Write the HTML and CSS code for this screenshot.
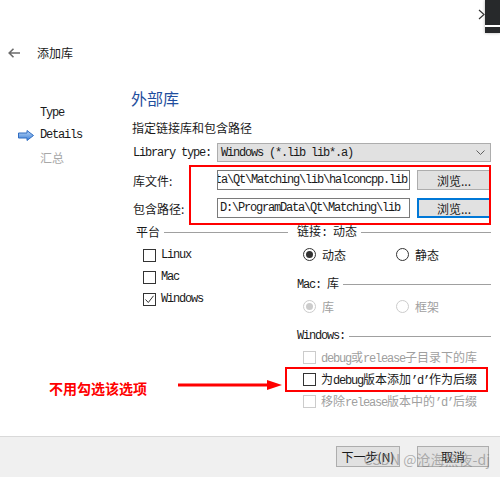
FILE: index.html
```html
<!DOCTYPE html>
<html lang="zh-CN">
<head>
    <meta charset="UTF-8">
    <meta name="viewport" content="width=device-width, initial-scale=1.0">
    <title>添加库</title>
    <link rel="stylesheet" href="styles.css">
</head>
<body>
    <div class="window">
        <div class="corner"><span class="corner-line"></span></div>
        <svg class="corner-chev" width="7" height="11" viewBox="0 0 7 11"><path d="M1 1 L6 5.5 L1 10" fill="none" stroke="#333" stroke-width="1.2"/></svg>

        <div class="header">
            <svg class="back" width="12" height="10" viewBox="0 0 12 10"><path d="M1 5 H12 M5.5 0.8 L1.2 5 L5.5 9.2" fill="none" stroke="#6b6b6b" stroke-width="1.6"/></svg>
            <span class="title">添加库</span>
        </div>

        <div class="main">
            <ul class="steps">
                <li><span class="step-icon"></span><span class="m">Type</span></li>
                <li class="current">
                    <span class="step-icon">
                        <svg width="16" height="11" viewBox="0 0 16 11">
                            <defs>
                                <linearGradient id="arr" x1="0" y1="0" x2="0" y2="1">
                                    <stop offset="0" stop-color="#b9d6f7"/>
                                    <stop offset="1" stop-color="#3d7fd6"/>
                                </linearGradient>
                            </defs>
                            <path d="M0.5 3 H9 V0.5 L15.5 5.5 L9 10.5 V8 H0.5 Z" fill="url(#arr)" stroke="#2f6cc2" stroke-width="1"/>
                        </svg>
                    </span>
                    <span class="m">Details</span>
                </li>
                <li class="todo"><span class="step-icon"></span>汇总</li>
            </ul>

            <div class="content">
                <h2>外部库</h2>
                <p class="subtitle">指定链接库和包含路径</p>

                <div class="form">
                    <label class="m">Library type:</label>
                    <div class="combo">
                        <span class="m">Windows (*.lib lib*.a)</span>
                        <svg width="9" height="5" viewBox="0 0 9 5"><path d="M0.5 0.5 L4.5 4.5 L8.5 0.5" fill="none" stroke="#606060" stroke-width="1"/></svg>
                    </div>
                    <label>库文件:</label>
                    <div class="path-row">
                        <div class="path scrolled"><span class="m">D:\ProgramData\Qt\Matching\lib\halconcpp.lib</span></div>
                        <button class="browse">浏览...</button>
                    </div>
                    <label>包含路径:</label>
                    <div class="path-row">
                        <div class="path"><span class="m">D:\ProgramData\Qt\Matching\lib</span></div>
                        <button class="browse focused">浏览...</button>
                    </div>
                    <div class="note-box"></div>
                </div>

                <div class="groups">
                    <div class="group group-left">
                        <div class="group-title"><span>平台</span></div>
                        <div class="rows">
                            <label class="check"><span class="box"></span><span class="m">Linux</span></label>
                            <label class="check"><span class="box"></span><span class="m">Mac</span></label>
                            <label class="check"><span class="box checked"><svg width="11" height="11" viewBox="0 0 11 11"><path d="M1.5 5.5 L4.3 8.5 L9.5 1.8" fill="none" stroke="#333" stroke-width="1"/></svg></span><span class="m">Windows</span></label>
                        </div>
                    </div>

                    <div class="group group-right">
                        <div class="group-title"><span>链接<span class="m">: </span>动态</span></div>
                        <div class="radio-row">
                            <label class="radio"><span class="dot on"></span>动态</label>
                            <label class="radio"><span class="dot"></span>静态</label>
                        </div>

                        <div class="group-title spaced"><span><span class="m">Mac: </span>库</span></div>
                        <div class="radio-row disabled">
                            <label class="radio"><span class="dot on"></span>库</label>
                            <label class="radio"><span class="dot"></span>框架</label>
                        </div>

                        <div class="group-title spaced"><span class="m">Windows:</span></div>
                        <div class="win-rows">
                            <label class="check disabled"><span class="box"></span><span class="txt"><span class="m">debug</span>或<span class="m">release</span>子目录下的库</span></label>
                            <label class="check flagged"><span class="box"></span><span class="txt">为<span class="m">debug</span>版本添加<span class="m">’d’</span>作为后缀</span></label>
                            <label class="check disabled"><span class="box"></span><span class="txt">移除<span class="m">release</span>版本中的<span class="m">’d’</span>后缀</span></label>
                        </div>
                    </div>
                </div>
            </div>
        </div>

        <div class="annotation">
            <span class="annotation-text">不用勾选该选项</span>
            <svg width="104" height="10" viewBox="0 0 104 10"><path d="M0 5 H92" stroke="#f00" stroke-width="3"/><path d="M89 0 L104 5 L89 10 Z" fill="#f00"/></svg>
        </div>

        <div class="footer">
            <button class="btn next">下一步(N)</button>
            <button class="btn cancel">取消</button>
        </div>
        <div class="watermark">CSDN @沧海黑夜-dj</div>
    </div>
</body>
</html>
```

FILE: styles.css
```css
* {
    box-sizing: border-box;
}

html, body {
    margin: 0;
    padding: 0;
}

body {
    width: 500px;
    height: 477px;
    overflow: hidden;
    background: #fff;
    font-family: "Noto Sans CJK SC", "Noto Sans", sans-serif;
    font-size: 12px;
    color: #1a1a1a;
}

/* latin text in the dialog is a narrow monospace */
.m {
    font-family: "Liberation Mono", "Noto Sans CJK SC", monospace;
    letter-spacing: -1.2px;
}

.window {
    position: relative;
    display: flex;
    flex-direction: column;
    height: 477px;
}

.corner {
    position: absolute;
    top: 0;
    right: 0;
    width: 15px;
    height: 33px;
    background: #27292b;
    box-shadow: 0 0 3px rgba(0, 0, 0, 0.3);
}

.corner-line {
    position: absolute;
    top: 25px;
    left: 0;
    right: 0;
    height: 2px;
    background: #fff;
}

.corner-chev {
    position: absolute;
    top: 9px;
    left: 478px;
}

.header {
    height: 80px;
    flex: 0 0 80px;
    display: flex;
    align-items: flex-start;
    padding: 44px 0 0 8px;
}

.back {
    margin-top: 4px;
    margin-right: 17px;
}

.title {
    line-height: 18px;
    color: #1a1a1a;
}

.main {
    flex: 1;
    display: flex;
    min-height: 0;
}

.steps {
    list-style: none;
    margin: 0;
    padding: 22px 0 0 18px;
    width: 131px;
    flex: 0 0 131px;
}

.steps li {
    height: 22px;
    display: flex;
    align-items: center;
}

.step-icon {
    width: 22px;
    display: flex;
    align-items: center;
}

.steps li.todo {
    color: #a8a8a8;
}

.content {
    flex: 1;
    min-width: 0;
    padding-right: 9px;
}

h2 {
    margin: 8px 0 0;
    font-size: 16px;
    line-height: 20px;
    font-weight: normal;
    color: #1f4e9e;
}

.subtitle {
    margin: 12px 0 0;
    line-height: 16px;
    padding-left: 1px;
}

.form {
    position: relative;
    margin-top: 7px;
    display: grid;
    grid-template-columns: 86px minmax(0, 1fr);
    row-gap: 8px;
    align-items: center;
}

.form label {
    padding-left: 2px;
}

.combo {
    height: 19px;
    border: 1px solid #adadad;
    background: #e1e1e1;
    display: flex;
    align-items: center;
    justify-content: space-between;
    padding: 0 5px 0 3px;
}

.path-row {
    display: flex;
    gap: 7px;
    height: 20px;
    min-width: 0;
}

.path {
    flex: 1;
    min-width: 0;
    border: 1px solid #7a7a7a;
    background: #fff;
    display: flex;
    align-items: center;
    overflow: hidden;
    white-space: nowrap;
    padding: 0 2px;
}

.path.scrolled {
    justify-content: flex-end;
}

.path .m {
    flex: 0 0 auto;
}

.browse {
    flex: 0 0 74px;
    border: 1px solid #adadad;
    background: #e1e1e1;
    font: inherit;
    color: #1a1a1a;
    padding: 0;
}

.browse.focused {
    border: 2px solid #0078d7;
}

.note-box {
    position: absolute;
    top: 22px;
    left: 58px;
    right: 0;
    height: 60px;
    border: 2px solid #f00;
}

.groups {
    display: flex;
    gap: 9px;
    margin-top: 7px;
}

.group-left {
    width: 157px;
    flex: 0 0 157px;
    padding-left: 5px;
}

.group-right {
    flex: 1;
}

.group-title {
    display: flex;
    align-items: center;
    height: 14px;
    line-height: 14px;
    white-space: nowrap;
}

.group-title::after {
    content: "";
    flex: 1;
    height: 1px;
    background: #a0a0a0;
    margin-left: 4px;
}

.group-title.spaced {
    margin-top: 12px;
}

.rows {
    margin-top: 5px;
    padding-left: 7px;
}

.win-rows {
    margin-top: 3px;
    padding-left: 6px;
}

.check {
    display: flex;
    align-items: center;
    height: 22px;
    white-space: nowrap;
}

.box {
    width: 13px;
    height: 13px;
    border: 1px solid #333;
    background: #fff;
    margin-right: 5px;
    flex: 0 0 13px;
    display: flex;
    align-items: center;
    justify-content: center;
}

.check.disabled {
    color: #a0a0a0;
}

.check.disabled .box {
    border-color: #cccccc;
}

.check.flagged {
    position: relative;
}

.check.flagged::after {
    content: "";
    position: absolute;
    top: -1px;
    bottom: -2px;
    left: -18px;
    right: 3px;
    border: 2px solid #f00;
}

.radio-row {
    display: flex;
    height: 22px;
    margin-top: 4px;
    padding-left: 6px;
}

.radio {
    width: 93px;
    display: flex;
    align-items: center;
    gap: 6px;
}

.dot {
    width: 13px;
    height: 13px;
    border: 1px solid #333;
    border-radius: 50%;
    background: #fff;
    display: flex;
    align-items: center;
    justify-content: center;
}

.dot.on::before {
    content: "";
    width: 7px;
    height: 7px;
    border-radius: 50%;
    background: #333;
}

.radio-row.disabled {
    color: #a0a0a0;
}

.radio-row.disabled .dot {
    border-color: #cccccc;
}

.radio-row.disabled .dot.on::before {
    background: #cccccc;
}

.annotation {
    position: absolute;
    top: 378px;
    left: 49px;
    display: flex;
    align-items: flex-start;
    gap: 31px;
}

.annotation-text {
    font-size: 14px;
    line-height: 20px;
    font-weight: bold;
    color: #f00;
}

.annotation svg {
    margin-top: 2px;
}

.footer {
    height: 41px;
    flex: 0 0 41px;
    border-top: 1px solid #d9d9d9;
    background: #f0f0f0;
    display: flex;
    justify-content: flex-end;
    align-items: flex-start;
    gap: 17px;
    padding: 9px 11px 0 0;
}

.btn {
    height: 21px;
    border: 1px solid #adadad;
    background: #e1e1e1;
    font: inherit;
    color: #1a1a1a;
    padding: 0;
}

.btn.next {
    width: 64px;
}

.btn.cancel {
    width: 72px;
}

.watermark {
    position: absolute;
    right: 10px;
    bottom: 9px;
    font-size: 14px;
    line-height: 18px;
    color: rgba(120, 120, 120, 0.55);
}
```
